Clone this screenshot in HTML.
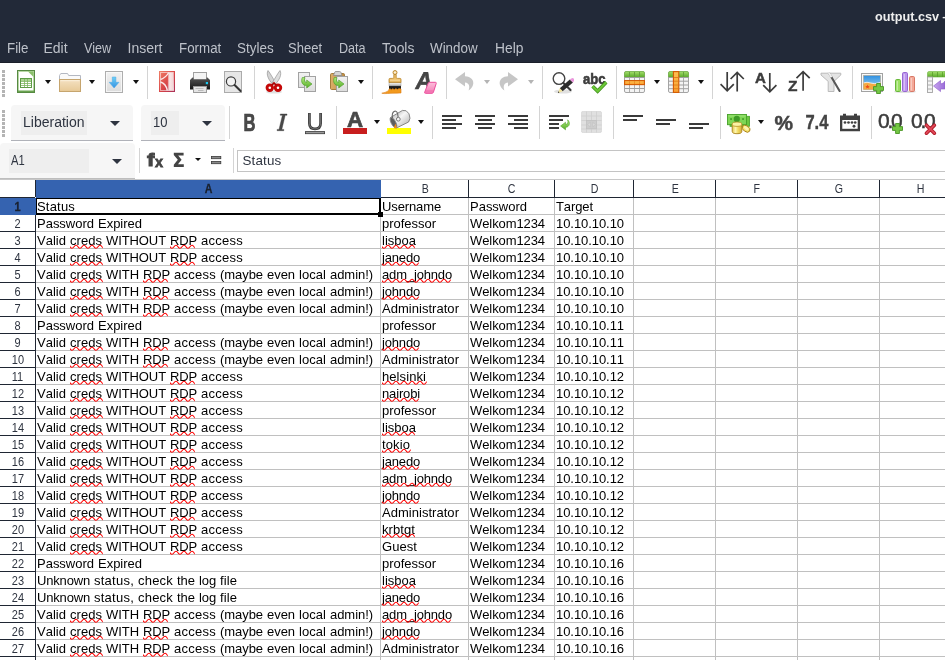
<!DOCTYPE html>
<html><head><meta charset="utf-8"><title>output.csv</title>
<style>
html,body{margin:0;padding:0;}
body{width:945px;height:660px;overflow:hidden;background:#fff;position:relative;font-family:"Liberation Sans",sans-serif;color:#000;}
div,span,svg{position:absolute;box-sizing:border-box;}
#dark{left:0;top:0;width:945px;height:63px;background:#222938;border-bottom:1px solid #1a1f2a;}
#title{left:874.5px;top:8px;font-weight:bold;font-size:13.5px;color:#eeeeee;white-space:nowrap;line-height:18px;transform-origin:0 0;transform:scaleX(0.94);}
.m{top:39px;font-size:14px;line-height:18px;color:#bec2ca;white-space:nowrap;transform-origin:0 0;}
/* grid */
.ch{top:180px;height:17px;background:#fff;text-align:center;font-size:12.5px;line-height:19px;padding-left:1px;overflow:hidden;color:#2e3440;border-bottom:0;}
.ch.sel{height:18px;background:#3563b0;font-weight:bold;color:#1a202d;-webkit-text-stroke:0.300px #1a202d;}
.rh{left:0;width:35px;height:16px;text-align:center;font-size:12.5px;line-height:19px;overflow:hidden;color:#2e3440;background:#fff;}
.ch i{font-style:normal;display:inline-block;transform:scaleX(0.85);}
.rh i{font-style:normal;display:inline-block;transform:scaleX(0.88);}
.rh.sel{width:36px;height:17px;padding-right:1px;background:#3563b0;font-weight:bold;color:#1a202d;-webkit-text-stroke:0.300px #1a202d;}
.c{font-size:13px;line-height:17px;height:17px;white-space:nowrap;color:#000;font-kerning:none;}
.c span{top:0;left:0;height:17px;white-space:pre;}
.wv{left:0;top:12px;width:calc(100% + 1px);height:6px;overflow:hidden;}
.hl{left:36px;width:909px;height:1px;background:#c0c0c0;}
.vl{top:198px;width:1px;height:462px;background:#c0c0c0;}
/* header lines */
.dk{background:#1f2633;}
.sep{width:1px;background:#d4d4d4;}
.ar{width:0;height:0;border-left:3.5px solid transparent;border-right:3.5px solid transparent;border-top:4px solid #111;}
.combo{background:#f6f6f6;border-bottom:1px solid #b0b2b9;border-radius:4px 4px 0 0;}
.inp{background:#eeeeee;font-size:14px;color:#2e3440;line-height:22px;padding-left:2px;white-space:nowrap;}
.inp b{font-weight:normal;display:inline-block;transform-origin:0 50%;}
.ar.big{border-left-width:5px;border-right-width:5px;border-top-width:5px;border-top-color:#2e3440;}
</style></head><body><div id="wrap" style="left:0;top:0;width:945px;height:660px;will-change:transform">
<svg width="0" height="0" style="left:0;top:0"><defs><pattern id="wave" x="0" y="0" width="8" height="6" patternUnits="userSpaceOnUse"><path d="M-4 2.8 Q-2 -0.2 0 2.8 Q2 5.8 4 2.8 Q6 -0.2 8 2.8 Q10 5.8 12 2.8" fill="none" stroke="#ff0000" stroke-width="1.1"/></pattern></defs></svg>
<div id="dark"></div>
<div id="title">output.csv —</div>
<div class="m" style="left:7.05px;transform:scaleX(0.952)">File</div>
<div class="m" style="left:43.50px;transform:scaleX(1.000)">Edit</div>
<div class="m" style="left:84.00px;transform:scaleX(0.900)">View</div>
<div class="m" style="left:127.50px;transform:scaleX(1.000)">Insert</div>
<div class="m" style="left:178.50px;transform:scaleX(0.953)">Format</div>
<div class="m" style="left:236.50px;transform:scaleX(0.960)">Styles</div>
<div class="m" style="left:288.20px;transform:scaleX(0.930)">Sheet</div>
<div class="m" style="left:338.80px;transform:scaleX(0.900)">Data</div>
<div class="m" style="left:382.30px;transform:scaleX(0.990)">Tools</div>
<div class="m" style="left:430.20px;transform:scaleX(0.956)">Window</div>
<div class="m" style="left:495.00px;transform:scaleX(0.985)">Help</div>

<!-- shared defs -->
<svg width="0" height="0" style="left:0;top:0"><defs>
<linearGradient id="gGreenV" x1="0" y1="0" x2="0" y2="1"><stop offset="0" stop-color="#a4de6c"/><stop offset="1" stop-color="#5cab2c"/></linearGradient>
<linearGradient id="gPage" x1="0" y1="0" x2="0" y2="1"><stop offset="0" stop-color="#f2f2f2"/><stop offset="1" stop-color="#dcdcdc"/></linearGradient>
<linearGradient id="gTan" x1="0" y1="0" x2="0" y2="1"><stop offset="0" stop-color="#f4e1c2"/><stop offset="1" stop-color="#e7c996"/></linearGradient>
<linearGradient id="gBlue" x1="0" y1="0" x2="0" y2="1"><stop offset="0" stop-color="#6fd0f6"/><stop offset="1" stop-color="#3592e2"/></linearGradient>
<linearGradient id="gRed" x1="0" y1="0" x2="1" y2="1"><stop offset="0" stop-color="#f08068"/><stop offset="0.550" stop-color="#d84446"/><stop offset="1" stop-color="#a83058"/></linearGradient>
<linearGradient id="gBlack" x1="0" y1="0" x2="0" y2="1"><stop offset="0" stop-color="#555"/><stop offset="1" stop-color="#141414"/></linearGradient>
<linearGradient id="gArrowG" x1="0" y1="0" x2="0" y2="1"><stop offset="0" stop-color="#b0ea7c"/><stop offset="1" stop-color="#56ae28"/></linearGradient>
<linearGradient id="gClip" x1="0" y1="0" x2="1" y2="0"><stop offset="0" stop-color="#dcae68"/><stop offset="1" stop-color="#c08c42"/></linearGradient>
<linearGradient id="gOrange" x1="0" y1="0" x2="0" y2="1"><stop offset="0" stop-color="#fdc050"/><stop offset="1" stop-color="#f9a030"/></linearGradient>
<linearGradient id="gSky" x1="0" y1="0" x2="0" y2="1"><stop offset="0" stop-color="#2f8fe0"/><stop offset="1" stop-color="#a8dcf4"/></linearGradient>
<linearGradient id="gPurple" x1="0" y1="0" x2="1" y2="0"><stop offset="0" stop-color="#c8a4f0"/><stop offset="1" stop-color="#9a6cd8"/></linearGradient>
<linearGradient id="gPink" x1="0" y1="0" x2="0" y2="1"><stop offset="0" stop-color="#fcc0dc"/><stop offset="1" stop-color="#f47ab4"/></linearGradient>
<linearGradient id="gBucket" x1="0" y1="0" x2="1" y2="1"><stop offset="0" stop-color="#9a9a9a"/><stop offset="0.450" stop-color="#f6f6f6"/><stop offset="1" stop-color="#a8a8a8"/></linearGradient>
<linearGradient id="gBand" x1="0" y1="0" x2="1" y2="0"><stop offset="0" stop-color="#fbeeee" stop-opacity="0.350"/><stop offset="0.350" stop-color="#fbf0f0" stop-opacity="0.950"/><stop offset="1" stop-color="#f6e4e4" stop-opacity="0.900"/></linearGradient>
<linearGradient id="gFerr" x1="0" y1="0" x2="0" y2="1"><stop offset="0" stop-color="#fcfcfc"/><stop offset="1" stop-color="#b4b4b4"/></linearGradient>
<linearGradient id="gCoin" x1="0" y1="0" x2="1" y2="0"><stop offset="0" stop-color="#e8c84c"/><stop offset="0.350" stop-color="#fdf6b0"/><stop offset="0.600" stop-color="#f2dc62"/><stop offset="1" stop-color="#d8b03c"/></linearGradient>
</defs></svg>

<!-- toolbar 1 grip -->
<svg style="left:2px;top:70px" width="3" height="27"><g fill="#b4b4b4"><rect y="0" width="3" height="3"/><rect y="4" width="3" height="3"/><rect y="8" width="3" height="3"/><rect y="12" width="3" height="3"/><rect y="16" width="3" height="3"/><rect y="20" width="3" height="3"/><rect y="24" width="3" height="3"/></g></svg>
<!-- toolbar 2 grip -->
<svg style="left:2px;top:110px" width="3" height="27"><g fill="#b4b4b4"><rect y="0" width="3" height="3"/><rect y="4" width="3" height="3"/><rect y="8" width="3" height="3"/><rect y="12" width="3" height="3"/><rect y="16" width="3" height="3"/><rect y="20" width="3" height="3"/><rect y="24" width="3" height="3"/></g></svg>

<!-- new spreadsheet -->
<svg style="left:17px;top:70px" width="18" height="23" viewBox="0 0 18 23">
<rect x="0.5" y="0.5" width="17" height="22" fill="#cfe5c0" stroke="#568a42"/>
<rect x="1.5" y="1.5" width="15" height="20" fill="#fff" stroke="#b9d8a6" stroke-width="1"/>
<path d="M11 1.5 L16.5 1.5 L16.5 7 Z" fill="#8cc06c"/>
<rect x="3.5" y="8.5" width="11" height="9" fill="#fff" stroke="#5e9c46"/>
<rect x="4" y="9" width="10" height="2" fill="#a9d490"/>
<path d="M4 11.5H14 M4 13.5H14 M4 15.5H14 M7.5 9V17 M10.5 9V17" stroke="#7db560" stroke-width="0.8" fill="none"/>
<rect x="1" y="20.5" width="16" height="1.5" fill="#6aa350"/>
</svg>
<div class="ar" style="left:45px;top:80px"></div>
<!-- open folder -->
<svg style="left:59px;top:72px" width="22" height="21" viewBox="0 0 22 21">
<path d="M0.5 8 V3.5 L1.8 1.5 H8.6 L9.6 3.5 H21.5 V8 Z" fill="#fafafa" stroke="#b4b8c2"/>
<rect x="0.5" y="7.5" width="21" height="12" fill="url(#gTan)" stroke="#c6a56e"/>
<path d="M1.5 8.7 H20.5" stroke="#fbf0dc" stroke-width="1"/>
</svg>
<div class="ar" style="left:89px;top:80px"></div>
<!-- save -->
<svg style="left:105px;top:71px" width="18" height="22" viewBox="0 0 18 22">
<rect x="0.500" y="0.500" width="17" height="21" fill="url(#gPage)" stroke="#aeaeae"/>
<rect x="1.5" y="1.5" width="15" height="19" fill="none" stroke="#fafafa" stroke-opacity="0.8"/>
<path d="M7.3 6 H10.9 V11.3 H14 L9.1 17 L4.2 11.3 H7.3 Z" fill="url(#gBlue)" stroke="#4aa8e8" stroke-width="0.5"/>
</svg>
<div class="ar" style="left:133px;top:80px"></div>
<div class="sep" style="left:147px;top:66px;height:33px"></div>
<!-- pdf -->
<svg style="left:159px;top:71px" width="16" height="21" viewBox="0 0 16 21">
<rect x="0" y="0" width="16" height="21" fill="url(#gRed)"/>
<rect x="1.5" y="1.5" width="13" height="18" fill="none" stroke="#fff" stroke-opacity="0.55"/>
<path d="M9.200 1.500 L14 1.500 L14.800 19.500 L8.500 19.500 Z" fill="url(#gBand)"/>
<path d="M1.5 8.5 C5 7.5 8 4.5 9.8 1.5 M1.5 11 C5 12 7.5 15.5 8.3 19.5" stroke="#fbeaea" stroke-width="1.400" fill="none"/>
</svg>
<!-- printer -->
<svg style="left:190px;top:72px" width="20" height="21" viewBox="0 0 20 21">
<rect x="3.5" y="0.5" width="13" height="7" fill="#f4f4f4" stroke="#a0a0a0"/>
<path d="M0 8 L2.5 5.5 H3.5 V7.5 H16.5 V5.5 H17.5 L20 8 V17.5 H0 Z" fill="url(#gBlack)"/>
<rect x="3.5" y="14.5" width="13" height="6" fill="#e4e4e4" stroke="#9a9a9a"/>
<path d="M5.5 16.5 H13.5 M8 18.5 H13.5" stroke="#b4b4b4" stroke-width="0.9"/>
<rect x="15.8" y="10" width="2.2" height="2.2" fill="#18c8f0"/>
</svg>
<!-- print preview -->
<svg style="left:224px;top:71px" width="19" height="22" viewBox="0 0 19 22">
<rect x="0.5" y="0.5" width="17" height="21" fill="#e6e6e6" stroke="#ababab"/>
<circle cx="7" cy="10.4" r="4.6" fill="#f2f2f2" stroke="#3a3a3a" stroke-width="1.2"/>
<path d="M10.6 14 L16.6 20" stroke="#333" stroke-width="2" stroke-linecap="round"/>
</svg>
<div class="sep" style="left:254px;top:66px;height:33px"></div>
<!-- cut -->
<svg style="left:265px;top:70px" width="18" height="24" viewBox="0 0 18 24">
<ellipse cx="9" cy="22" rx="8" ry="1.6" fill="#000" fill-opacity="0.12"/>
<path d="M3 0.500 C1 4.500 3.300 9.500 8.200 15 L10.700 12.600 C8 8.500 5.400 3.500 3 0.500 Z" fill="#d4d4d4" stroke="#868686" stroke-width="0.600"/>
<path d="M15 0.500 C17 4.500 14.700 9.500 9.800 15 L7.300 12.600 C10 8.500 12.600 3.500 15 0.500 Z" fill="#dedede" stroke="#868686" stroke-width="0.600"/>
<circle cx="4.8" cy="17.7" r="2.750" fill="none" stroke="#c40808" stroke-width="2.900"/>
<circle cx="13" cy="17.7" r="2.750" fill="none" stroke="#c40808" stroke-width="2.900"/>
<path d="M7 15 L9 13 L11 15" stroke="#a00" stroke-width="1.6" fill="none"/>
</svg>
<!-- copy -->
<svg style="left:298px;top:72px" width="18" height="20" viewBox="0 0 18 20">
<rect x="0.5" y="0.5" width="11" height="15" fill="url(#gPage)" stroke="#a2a2a2"/>
<rect x="6.5" y="4.5" width="11" height="15" fill="url(#gPage)" stroke="#a2a2a2"/>
<path d="M7 5.600 C5.900 8.400 6.700 10.400 8.700 10.500 V8 L14 12 L8.700 16 V13.600 C4.400 13.700 2.500 9.800 4.300 5.500 Z" fill="url(#gArrowG)" stroke="#4a9a26" stroke-width="0.600"/>
</svg>
<!-- paste -->
<svg style="left:329px;top:70px" width="20" height="22" viewBox="0 0 20 22">
<rect x="1.5" y="3.5" width="14" height="16" rx="1.2" fill="url(#gClip)" stroke="#a47c3c"/>
<path d="M4.5 5.5 L5.5 2.5 Q5.8 1.5 7 1.5 H10.5 Q11.6 1.5 12 2.5 L13 5.5 Z" fill="#d4d4d4" stroke="#8a8a8a" stroke-width="0.8"/>
<rect x="7.5" y="6.5" width="11" height="15" fill="url(#gPage)" stroke="#a2a2a2"/>
<path d="M8 7.600 C6.900 10.400 7.700 12.400 9.700 12.500 V10 L15 14 L9.700 18 V15.600 C5.400 15.700 3.500 11.800 5.300 7.500 Z" fill="url(#gArrowG)" stroke="#4a9a26" stroke-width="0.600"/>
</svg>
<div class="ar" style="left:358px;top:80px"></div>
<div class="sep" style="left:372px;top:66px;height:33px"></div>
<!-- clone formatting brush -->
<svg style="left:381px;top:69px" width="21" height="26" viewBox="0 0 21 26">
<rect x="8" y="16.800" width="12" height="4" fill="#1c1c1c"/>
<rect x="8" y="13.400" width="12" height="3.500" fill="url(#gFerr)" stroke="#8a8a8a" stroke-width="0.400"/>
<path d="M12.800 5.500 V8.500 Q12.800 9.300 11.400 9.400 H9 Q8 9.400 8 10.400 V13.400 H20 V10.400 Q20 9.400 19 9.400 H16.600 Q15.200 9.300 15.200 8.500 V5.500 Z" fill="#ecbe68" stroke="#b8842a" stroke-width="0.800"/>
<path d="M9 11.200 H19" stroke="#f8dca0" stroke-width="0.900"/>
<circle cx="14" cy="3.500" r="2" fill="#f4d8a0" stroke="#b8842a" stroke-width="0.900"/>
<circle cx="14" cy="3.500" r="0.700" fill="#fff"/>
<path d="M0.800 24.200 C4 23.800 6 22.600 7.600 21.400 C8 20 8.400 19.400 9.200 19.800 L10.400 20.800 L11.800 19.600 L13.200 20.800 L14.800 19.400 L16.400 20.600 L18 19.400 L20 20 V24 C17 23.600 15 24.600 12 24.200 C8 24 5 25.200 0.800 24.200 Z" fill="#f29a1e" stroke="#dc7a10" stroke-width="0.600" stroke-linejoin="round"/>
</svg>
<!-- clear formatting -->
<svg style="left:414px;top:72px" width="23" height="23" viewBox="0 0 23 23">
<text x="1.400" y="17" font-family="Liberation Sans" font-weight="bold" font-style="italic" font-size="23.200" fill="#454545" stroke="#454545" stroke-width="0.600">A</text>
<path d="M15.400 10.300 H21.400 Q22.600 10.300 22.200 11.500 L19.400 20.300 Q19 21.300 18 21.300 H11.400 Q10.200 21.300 10.700 20.200 L14.200 11.200 Q14.600 10.300 15.400 10.300 Z" fill="url(#gPink)" stroke="#ec4c9c" stroke-width="1" stroke-linejoin="round"/>
<path d="M11.200 19 H19.600" stroke="#f064a8" stroke-width="0.900"/>
</svg>
<div class="sep" style="left:446px;top:66px;height:33px"></div>
<!-- undo (disabled) -->
<svg style="left:454px;top:71px" width="21" height="21" viewBox="0 0 21 21">
<path d="M1 8.3 L11 1 V5.2 C17 5.4 20.5 9.5 19 14 C18.2 16.5 16.5 18.3 14.6 19.4 C16 16 15.5 12 11 11.6 V15.6 Z" fill="#c6c6c6"/>
</svg>
<div class="ar" style="left:484px;top:80px;border-top-color:#b4b4b4"></div>
<!-- redo (disabled) -->
<svg style="left:498px;top:71px" width="21" height="21" viewBox="0 0 21 21">
<path d="M20 8.3 L10 1 V5.2 C4 5.4 0.5 9.5 2 14 C2.800 16.5 4.500 18.3 6.400 19.4 C5 16 5.500 12 10 11.6 V15.6 Z" fill="#c6c6c6"/>
</svg>
<div class="ar" style="left:528px;top:80px;border-top-color:#b4b4b4"></div>
<div class="sep" style="left:542px;top:66px;height:33px"></div>
<!-- find & replace -->
<svg style="left:551px;top:71px" width="24" height="24" viewBox="0 0 24 24">
<ellipse cx="12" cy="20.5" rx="9" ry="2" fill="#000" fill-opacity="0.12"/>
<circle cx="8" cy="7.6" r="5.8" fill="#fff" stroke="#444" stroke-width="1.4"/>
<path d="M12.4 12 L19.5 19" stroke="#3a3a3a" stroke-width="2.2" stroke-linecap="round"/>
<path d="M18.8 8.6 L22 11.4 L11.6 20.2 L8.8 17.2 Z" fill="#2c2c2c"/>
<path d="M18.8 8.6 L20.4 7.4 Q22 6.6 23 8 Q23.6 9.6 22 11.4 Z" fill="#ea96dc"/>
<path d="M8.8 17.2 L11.6 20.2 L7 22 Z" fill="#f2e49a"/>
<path d="M7 22 L8.4 21.4 L7.6 20.2 Z" fill="#111"/>
</svg>
<!-- spelling -->
<svg style="left:582px;top:70px" width="27" height="24" viewBox="0 0 27 24">
<text x="1" y="13.8" font-family="Liberation Sans" font-weight="bold" font-size="15" fill="#3c3c3c" stroke="#3c3c3c" stroke-width="0.600" textLength="22.500" lengthAdjust="spacingAndGlyphs">abc</text>
<path d="M10.6 16.2 L15.6 21.2 L24.2 12.2" fill="none" stroke="#3e8c1a" stroke-width="3.6" stroke-linejoin="miter"/>
<path d="M10.6 16.2 L15.6 21.2 L24.2 12.2" fill="none" stroke="#6cc838" stroke-width="2.2" stroke-linejoin="miter"/>
</svg>
<div class="sep" style="left:616px;top:66px;height:33px"></div>
<!-- rows -->
<svg style="left:624px;top:71px" width="21" height="22" viewBox="0 0 21 22">
<rect x="0.5" y="0.5" width="20" height="21" rx="1.5" fill="#f4f4f4" stroke="#a4a4a4"/>
<path d="M0.5 6 V2 Q0.5 0.5 2 0.5 H19 Q20.500 0.5 20.5 2 V6 Z" fill="url(#gGreenV)" stroke="#6cb43c" stroke-width="0.6"/>
<path d="M5.5 1V21 M10.5 1V21 M15.5 1V21" stroke="#9c9c9c" stroke-width="0.8" fill="none"/>
<path d="M5.500 1V6 M10.5 1V6 M15.5 1V6" stroke="#58a028" stroke-width="0.8" fill="none"/>
<path d="M1 6.500H20 M1 17.500H20" stroke="#a0a0a0" stroke-width="1" fill="none"/>
<rect x="0.600" y="9.600" width="19.800" height="4" fill="url(#gOrange)" stroke="#d45a00" stroke-width="1.100"/>
<path d="M5.500 10.200V13 M10.500 10.200V13 M15.500 10.200V13" stroke="#e88820" stroke-width="0.800" fill="none"/>
</svg>
<div class="ar" style="left:654px;top:80px"></div>
<!-- columns -->
<svg style="left:668px;top:71px" width="21" height="22" viewBox="0 0 21 22">
<rect x="0.5" y="0.5" width="20" height="21" rx="1.5" fill="#f4f4f4" stroke="#a4a4a4"/>
<path d="M0.5 6 V2 Q0.5 0.5 2 0.5 H19 Q20.500 0.5 20.5 2 V6 Z" fill="url(#gGreenV)" stroke="#6cb43c" stroke-width="0.6"/>
<path d="M5.5 1V21 M10.5 1V21 M15.5 1V21" stroke="#9c9c9c" stroke-width="0.8" fill="none"/>
<path d="M1 6.500H20 M1 10.200H20 M1 14H20 M1 17.700H20" stroke="#a0a0a0" stroke-width="1" fill="none"/>
<path d="M15.500 1V6" stroke="#58a028" stroke-width="0.8" fill="none"/>
<rect x="5.400" y="0.6" width="5.4" height="20.8" fill="url(#gOrange)" stroke="#d45a00" stroke-width="1.1"/>
<path d="M6 6.500H10.500 M6 10.200H10.500 M6 14H10.500 M6 17.700H10.500" stroke="#e07a18" stroke-width="0.900" fill="none"/>
</svg>
<div class="ar" style="left:698px;top:80px"></div>
<div class="sep" style="left:712px;top:66px;height:33px"></div>
<!-- sort -->
<svg style="left:719px;top:70px" width="26" height="23" viewBox="0 0 26 23">
<g fill="none" stroke="#3c3c3c" stroke-width="1.7">
<path d="M8.2 2 V20.6 M1.6 14.2 L8.2 20.8 L14.8 14.2"/>
<path d="M18.2 21.5 V2.600 M11.6 9 L18.2 2.400 L24.8 9"/>
</g></svg>
<!-- sort asc -->
<svg style="left:754px;top:70px" width="24" height="24" viewBox="0 0 24 24">
<text x="0.900" y="13.400" font-family="Liberation Sans" font-weight="bold" font-size="15" fill="#3c3c3c" stroke="#3c3c3c" stroke-width="0.500">A</text>
<g fill="none" stroke="#3c3c3c" stroke-width="1.7"><path d="M15.8 3 V21.6 M9.2 15.200 L15.8 21.8 L22.4 15.2"/></g>
</svg>
<!-- sort desc -->
<svg style="left:787px;top:69px" width="24" height="24" viewBox="0 0 24 24">
<text x="1" y="22.400" font-family="Liberation Sans" font-weight="bold" font-size="15.500" fill="#3c3c3c" stroke="#3c3c3c" stroke-width="0.400">Z</text>
<g fill="none" stroke="#3c3c3c" stroke-width="1.7"><path d="M16.1 21.7 V2.800 M9.5 9.200 L16.1 2.600 L22.700 9.200"/></g>
</svg>
<!-- autofilter -->
<svg style="left:820px;top:72px" width="23" height="21" viewBox="0 0 23 21">
<path d="M1 1.2 H20.800 V3 L14 9.400 V19.500 H8.200 V9.400 L1 3 Z" fill="#e4e4e4" stroke="#b4b4b4" stroke-width="0.9"/>
<path d="M9 1 L19.600 19" stroke="#585858" stroke-width="2.100" stroke-linecap="round"/>
<path d="M9 1 L11 4.400" stroke="#eee" stroke-width="2.100" stroke-linecap="round"/>
</svg>
<div class="sep" style="left:852px;top:66px;height:33px"></div>
<!-- insert image -->
<svg style="left:861px;top:73px" width="24" height="21" viewBox="0 0 24 21">
<rect x="0.5" y="0.5" width="21" height="18" fill="#fafafa" stroke="#a2a2a2"/>
<rect x="2.5" y="2.500" width="17" height="14" fill="url(#gSky)"/>
<path d="M2.500 10 Q6 8.500 9.500 10 T19.500 9.500 V16.500 H2.500 Z" fill="#f4aa42"/>
<path d="M2.500 10 Q6 8.500 9.500 10 T19.500 9.500" fill="none" stroke="#fff" stroke-width="0.9" stroke-opacity="0.85"/>
<rect x="2.500" y="2.500" width="17" height="14" fill="none" stroke="#c08030" stroke-opacity="0.5" stroke-width="0.6"/>
<path d="M6.500 11.400 L7.100 12.900 L8.700 13 L7.500 14 L7.900 15.600 L6.500 14.700 L5.100 15.600 L5.500 14 L4.300 13 L5.900 12.900 Z" fill="#f04818"/>
<path d="M15.600 10.500 H19.400 V13.600 H22.500 V17.400 H19.400 V20.500 H15.600 V17.400 H12.500 V13.600 H15.600 Z" fill="#74c844" stroke="#469422" stroke-width="0.9" stroke-linejoin="round"/>
</svg>
<!-- chart -->
<svg style="left:893px;top:71px" width="24" height="22" viewBox="0 0 24 22">
<ellipse cx="12" cy="20.800" rx="11" ry="1" fill="#000" fill-opacity="0.160"/>
<rect x="2.500" y="8.500" width="5" height="12" rx="1.200" fill="#9ae062" stroke="#68b83a" stroke-width="1"/>
<rect x="9.500" y="1.500" width="5" height="19" rx="1.200" fill="#bc94ee" stroke="#9868d2" stroke-width="1"/>
<rect x="16.500" y="5.500" width="5" height="15" rx="1.200" fill="#f4a898" stroke="#d87866" stroke-width="1"/>
<path d="M4.300 10V19.500 M11.300 3V19.500 M18.300 7V19.500" stroke="#fff" stroke-opacity="0.450" stroke-width="1.200"/>
</svg>
<!-- pivot table -->
<svg style="left:927px;top:71px" width="18" height="22" viewBox="0 0 18 22">
<path d="M0.5 6 V2 Q0.5 0.500 2 0.500 H18 V6 Z" fill="url(#gGreenV)" stroke="#6cb43c" stroke-width="0.6"/>
<path d="M5.500 1V6 M10.500 1V6 M15.500 1V6" stroke="#58a028" stroke-width="0.8"/>
<rect x="0.500" y="6" width="5" height="15.500" fill="#f4f4f4" stroke="#a4a4a4" stroke-width="0.9"/>
<path d="M1 10H5.500 M1 14H5.500 M1 18H5.500" stroke="#9c9c9c" stroke-width="0.8"/>
<path d="M6.500 15 L13.500 9.500 V12.800 C15.500 12.800 17 11.800 18 10 V18 H13.500 V20.600 Z" fill="url(#gPurple)" stroke="#8c5cc8" stroke-width="0.6"/>
</svg>
<!-- toolbar 2 -->
<div class="combo" style="left:11px;top:105px;width:122px;height:36px"></div>
<div class="inp" style="left:21px;top:111px;width:66px;height:24px">Liberation</div>
<div class="ar big" style="left:110px;top:121px"></div>
<div class="combo" style="left:141px;top:105px;width:84px;height:36px"></div>
<div class="inp" style="left:151px;top:111px;width:28px;height:24px;padding-left:1.5px"><b style="transform:scaleX(0.93)">10</b></div>
<div class="ar big" style="left:202px;top:121px"></div>
<div class="sep" style="left:229px;top:106px;height:33px"></div>
<!-- bold -->
<svg style="left:242px;top:111px" width="16" height="22" viewBox="0 0 16 22">
<text x="1.600" y="19.700" font-family="Liberation Sans" font-weight="bold" font-size="23" fill="#4a4a4a" stroke="#3a3a3a" stroke-width="0.700" textLength="12" lengthAdjust="spacingAndGlyphs">B</text>
</svg>
<!-- italic -->
<svg style="left:275px;top:112px" width="14" height="21" viewBox="0 0 14 21">
<path d="M5.300 2 H12 V3.300 H10.200 L6.800 17.400 H8.800 V18.700 H2.100 V17.400 H4 L7.400 3.300 H5.300 Z" fill="#484848" stroke="#3a3a3a" stroke-width="0.400"/>
</svg>
<!-- underline -->
<svg style="left:304px;top:112px" width="22" height="23" viewBox="0 0 22 23">
<path d="M5.400 1 V11.200 Q5.400 16.900 11 16.900 Q16.600 16.900 16.600 11.200 V1" fill="none" stroke="#3a3a3a" stroke-width="2.700"/>
<path d="M5.400 1.500 V11.200 Q5.400 16.900 11 16.900 Q16.600 16.900 16.600 11.200 V1.500" fill="none" stroke="#8a8a8a" stroke-width="0.700"/>
<rect x="1.400" y="19.600" width="19.200" height="2.100" fill="#9a9a9a" stroke="#3a3a3a" stroke-width="0.800"/>
</svg>
<div class="sep" style="left:336px;top:106px;height:33px"></div>
<!-- font color -->
<svg style="left:343px;top:108px" width="24" height="26" viewBox="0 0 24 26">
<text x="4" y="18.800" font-family="Liberation Sans" font-weight="bold" font-size="22.300" fill="#484848" stroke="#484848" stroke-width="0.700">A</text>
<rect x="0" y="20" width="24" height="6" fill="#c81e1e"/>
</svg>
<div class="ar" style="left:374px;top:120px"></div>
<!-- background color bucket -->
<svg style="left:386px;top:108px" width="26" height="26" viewBox="0 0 26 26">
<rect x="1" y="20" width="24" height="6" fill="#ffff00"/>
<path d="M4.600 9.400 L16.500 2.400 Q20.500 1.400 23 5.800 Q25.200 10.600 22.600 14 L10.400 20 Z" fill="url(#gBucket)" stroke="#6e6e6e" stroke-width="0.800"/>
<ellipse cx="7.500" cy="14.700" rx="2.300" ry="5.800" transform="rotate(-28 7.500 14.700)" fill="#5e5e5e" stroke="#8a8a8a" stroke-width="0.800"/>
<path d="M6.600 10 C5 3 10.500 1 11.600 5.600 L12.100 9" fill="none" stroke="#6a6a6a" stroke-width="1.100"/>
<circle cx="12.300" cy="11.200" r="1.900" fill="#f4f4f4" stroke="#6a6a6a" stroke-width="0.900"/>
<path d="M7.600 20.200 Q8.400 18.400 9.300 15.400 Q11 18.400 10.800 20.200 Z" fill="#f08a1c"/>
</svg>
<div class="ar" style="left:418px;top:120px"></div>
<div class="sep" style="left:432px;top:106px;height:33px"></div>
<!-- align left -->
<svg style="left:442px;top:115px" width="20" height="14"><g fill="#3a3a3a"><rect x="0" y="0" width="20" height="2"/><rect x="0" y="4" width="14" height="2"/><rect x="0" y="8" width="20" height="2"/><rect x="0" y="12" width="14" height="2"/></g></svg>
<!-- align center -->
<svg style="left:475px;top:115px" width="20" height="14"><g fill="#3a3a3a"><rect x="0" y="0" width="20" height="2"/><rect x="3" y="4" width="14" height="2"/><rect x="0" y="8" width="20" height="2"/><rect x="3" y="12" width="14" height="2"/></g></svg>
<!-- align right -->
<svg style="left:508px;top:115px" width="20" height="14"><g fill="#3a3a3a"><rect x="0" y="0" width="20" height="2"/><rect x="6" y="4" width="14" height="2"/><rect x="0" y="8" width="20" height="2"/><rect x="6" y="12" width="14" height="2"/></g></svg>
<div class="sep" style="left:539px;top:106px;height:33px"></div>
<!-- wrap text -->
<svg style="left:549px;top:115px" width="22" height="16" viewBox="0 0 22 16"><g fill="#3a3a3a"><rect x="0" y="0" width="20" height="2"/><rect x="0" y="4" width="14" height="2"/><rect x="0" y="8" width="10" height="2"/><rect x="0" y="12" width="10" height="2"/></g>
<path d="M18.600 4.800 C21.800 7.600 20.600 12.200 16.500 12.400 V14.800 L11.600 11 L16.500 7.300 V9.600 C18.800 9.400 19.500 7 18.600 4.800 Z" fill="url(#gArrowG)" stroke="#52a42a" stroke-width="0.600"/>
</svg>
<!-- merge cells (disabled) -->
<svg style="left:581px;top:111px" width="21" height="22" viewBox="0 0 21 22">
<rect x="0.300" y="0.300" width="20.400" height="21.400" rx="2" fill="#e0e0e0" stroke="#d2d2d2" stroke-width="0.600"/>
<path d="M5.500 0.500V21.500 M10.500 0.500V21.500 M15.500 0.500V21.500 M0.500 5H20.500 M0.500 9.500H20.500 M0.500 14H20.500 M0.500 18H20.500" stroke="#d0d0d0" stroke-width="0.900" fill="none"/>
<rect x="5.600" y="9.400" width="9.800" height="8.400" fill="#cdcdcd" stroke="#c0c0c0" stroke-width="0.700"/>
<path d="M6.600 13.600 L9.300 11.400 V15.800 Z M14.400 13.600 L11.700 11.400 V15.800 Z" fill="#dcdcdc" stroke="#bcbcbc" stroke-width="0.500"/>
</svg>
<div class="sep" style="left:613px;top:106px;height:33px"></div>
<!-- vertical align top/center/bottom -->
<svg style="left:623px;top:115px" width="20" height="6"><g fill="#3a3a3a"><rect x="0" y="0" width="20" height="2"/><rect x="0" y="4" width="14" height="2"/></g></svg>
<svg style="left:656px;top:119px" width="20" height="6"><g fill="#3a3a3a"><rect x="0" y="0" width="20" height="2"/><rect x="0" y="4" width="14" height="2"/></g></svg>
<svg style="left:689px;top:123px" width="20" height="6"><g fill="#3a3a3a"><rect x="0" y="0" width="20" height="2"/><rect x="0" y="4" width="14" height="2"/></g></svg>
<div class="sep" style="left:720px;top:106px;height:33px"></div>
<!-- currency -->
<svg style="left:726px;top:113px" width="26" height="22" viewBox="0 0 26 22">
<rect x="4" y="3.300" width="19.500" height="10" fill="#6cc840" stroke="#46a028" stroke-width="0.800"/>
<rect x="1.500" y="1.500" width="19" height="10.200" fill="#7ed654" stroke="#46a028" stroke-width="0.900"/>
<rect x="2.400" y="2.400" width="17.200" height="1.200" fill="#a4e880" fill-opacity="0.700"/>
<circle cx="10.800" cy="5.900" r="3.100" fill="#3e9a26"/>
<path d="M6.800 11.700 Q6.800 8.600 10.800 8.600 Q14.800 8.600 14.800 11.700 Z" fill="#3e9a26"/>
<rect x="4.200" y="5.200" width="1.700" height="1.700" fill="#3e9a26"/><rect x="16.200" y="5.200" width="1.700" height="1.700" fill="#3e9a26"/>
<ellipse cx="20.100" cy="15.700" rx="4.300" ry="2.900" transform="rotate(35 20.100 15.700)" fill="#f6e066" stroke="#a8821e" stroke-width="0.900"/>
<ellipse cx="20.300" cy="15.200" rx="2.800" ry="1.500" transform="rotate(35 20.300 15.200)" fill="#fcf4b0"/>
<path d="M6.200 11.200 V18.400 Q6.200 20.700 11 20.700 Q15.800 20.700 15.800 18.400 V11.200 Z" fill="url(#gCoin)" stroke="#a8821e" stroke-width="0.900"/>
<ellipse cx="11" cy="11.200" rx="4.800" ry="2.200" fill="#fbf2a4" stroke="#b89226" stroke-width="0.800"/>
</svg>
<div class="ar" style="left:758px;top:120px"></div>
<!-- percent -->
<svg style="left:773px;top:111px" width="22" height="22" viewBox="0 0 22 22">
<text x="1.500" y="18.600" font-family="Liberation Sans" font-weight="bold" font-size="21" fill="#444" stroke="#444" stroke-width="0.500" textLength="18.500" lengthAdjust="spacingAndGlyphs">%</text>
</svg>
<!-- number 7.4 -->
<svg style="left:804px;top:111px" width="26" height="22" viewBox="0 0 26 22">
<text x="1.400" y="18.400" font-family="Liberation Sans" font-weight="bold" font-size="20.500" fill="#444" stroke="#444" stroke-width="0.400" textLength="23" lengthAdjust="spacingAndGlyphs">7.4</text>
</svg>
<!-- date -->
<svg style="left:839px;top:113px" width="22" height="19" viewBox="0 0 22 19">
<path d="M1 2.500 H4 V0.800 H7 V2.500 H15 V0.800 H18 V2.500 H21 V18.200 H1 Z" fill="#404040"/>
<rect x="3.300" y="7" width="15.400" height="8.800" fill="#fff"/>
<g fill="#404040"><circle cx="6" cy="9.500" r="1.350"/><circle cx="9.500" cy="9.500" r="1.350"/><circle cx="13" cy="9.500" r="1.350"/><circle cx="16.200" cy="9.500" r="1.350"/><circle cx="15" cy="13.300" r="1.450"/></g>
</svg>
<div class="sep" style="left:871px;top:106px;height:33px"></div>
<!-- add decimal -->
<svg style="left:877px;top:110px" width="28" height="26" viewBox="0 0 28 26">
<text x="1" y="17.600" font-family="Liberation Sans" font-size="21" fill="#3c3c3c" stroke="#3c3c3c" stroke-width="0.500" letter-spacing="-2.300">0.0</text>
<path d="M18.600 13.500 H22.400 V16.600 H25.500 V20.400 H22.400 V23.500 H18.600 V20.400 H15.500 V16.600 H18.600 Z" fill="#74c844" stroke="#469422" stroke-width="0.900" stroke-linejoin="round"/>
</svg>
<!-- delete decimal -->
<svg style="left:910px;top:110px" width="28" height="26" viewBox="0 0 28 26">
<text x="1" y="17.600" font-family="Liberation Sans" font-size="21" fill="#3c3c3c" stroke="#3c3c3c" stroke-width="0.500" letter-spacing="-2.300">0.0</text>
<path d="M16.400 15.200 L24.400 23.200 M24.400 15.200 L16.400 23.200" stroke="#b01c28" stroke-width="3.600" stroke-linecap="round"/>
<path d="M16.400 15.200 L24.400 23.200 M24.400 15.200 L16.400 23.200" stroke="#e04858" stroke-width="1.800" stroke-linecap="round"/>
</svg>

<!-- formula bar icons -->
<svg style="left:146px;top:150px" width="19" height="19" viewBox="0 0 19 19">
<text x="1" y="15.800" font-family="Liberation Sans" font-weight="bold" font-size="18.600" fill="#444" stroke="#444" stroke-width="0.900" textLength="7.400" lengthAdjust="spacingAndGlyphs">f</text>
<text x="9" y="16.800" font-family="Liberation Sans" font-weight="bold" font-size="15" fill="#444" stroke="#444" stroke-width="0.800" textLength="8" lengthAdjust="spacingAndGlyphs">x</text>
</svg>
<svg style="left:173px;top:152px" width="12" height="16" viewBox="0 0 12 16">
<path d="M0.800 0.800 H10.600 V3.600 H5.200 L8.600 7.700 L5 12.200 H10.800 V15 H0.800 V12.800 L4.800 7.700 L0.800 3 Z" fill="#444"/>
</svg>
<div class="ar" style="left:195px;top:158px;border-left-width:3px;border-right-width:3px;border-top-width:3.500px"></div>
<svg style="left:211px;top:156px" width="11" height="9"><rect x="0.500" y="0.500" width="9.300" height="2.200" fill="#8a8a8a" stroke="#3a3a3a" stroke-width="0.800"/><rect x="0.500" y="5.500" width="9.300" height="2.200" fill="#8a8a8a" stroke="#3a3a3a" stroke-width="0.800"/></svg>


<!-- formula bar -->
<div class="combo" style="left:0;top:143px;width:135px;height:36px;border-bottom:1px solid #bdbdbd"></div>
<div class="inp" style="left:9px;top:149px;width:80px;height:24px;"><b style="transform:scaleX(0.8)">A1</b></div>
<div class="ar" style="left:112px;top:159px;border-left-width:5px;border-right-width:5px;border-top-width:5px;border-top-color:#2e3440"></div>
<div class="sep" style="left:139px;top:148px;height:25px"></div>
<div class="sep" style="left:233px;top:148px;height:25px"></div>
<div style="left:237px;top:150px;width:720px;height:22px;border:1px solid #c4c4c4;background:#fff"></div>
<div style="left:242.5px;top:149px;font-size:13.400px;line-height:23px;color:#2e3440;letter-spacing:0.150px">Status</div>

<!-- grid -->
<div style="left:0;top:179px;width:945px;height:1px;background:#c8c8c8"></div>
<div style="left:0;top:180px;width:35px;height:17px;background:#fff"></div>
<div class="hl" style="top:214px"></div>
<div class="hl" style="top:231px"></div>
<div class="hl" style="top:248px"></div>
<div class="hl" style="top:265px"></div>
<div class="hl" style="top:282px"></div>
<div class="hl" style="top:299px"></div>
<div class="hl" style="top:316px"></div>
<div class="hl" style="top:333px"></div>
<div class="hl" style="top:350px"></div>
<div class="hl" style="top:367px"></div>
<div class="hl" style="top:384px"></div>
<div class="hl" style="top:401px"></div>
<div class="hl" style="top:418px"></div>
<div class="hl" style="top:435px"></div>
<div class="hl" style="top:452px"></div>
<div class="hl" style="top:469px"></div>
<div class="hl" style="top:486px"></div>
<div class="hl" style="top:503px"></div>
<div class="hl" style="top:520px"></div>
<div class="hl" style="top:537px"></div>
<div class="hl" style="top:554px"></div>
<div class="hl" style="top:571px"></div>
<div class="hl" style="top:588px"></div>
<div class="hl" style="top:605px"></div>
<div class="hl" style="top:622px"></div>
<div class="hl" style="top:639px"></div>
<div class="hl" style="top:656px"></div>
<div class="hl" style="top:673px"></div>
<div class="vl" style="left:380px"></div>
<div class="vl" style="left:468px"></div>
<div class="vl" style="left:554px"></div>
<div class="vl" style="left:633px"></div>
<div class="vl" style="left:715px"></div>
<div class="vl" style="left:797px"></div>
<div class="vl" style="left:879px"></div>
<div class="vl" style="left:961px"></div>
<div class="ch sel" style="left:36px;width:345px"><i>A</i></div>
<div class="ch" style="left:381px;width:87px"><i>B</i></div>
<div class="dk" style="left:468px;top:180px;width:1px;height:17px"></div>
<div class="ch" style="left:469px;width:85px"><i>C</i></div>
<div class="dk" style="left:554px;top:180px;width:1px;height:17px"></div>
<div class="ch" style="left:555px;width:78px"><i>D</i></div>
<div class="dk" style="left:633px;top:180px;width:1px;height:17px"></div>
<div class="ch" style="left:634px;width:81px"><i>E</i></div>
<div class="dk" style="left:715px;top:180px;width:1px;height:17px"></div>
<div class="ch" style="left:716px;width:81px"><i>F</i></div>
<div class="dk" style="left:797px;top:180px;width:1px;height:17px"></div>
<div class="ch" style="left:798px;width:81px"><i>G</i></div>
<div class="dk" style="left:879px;top:180px;width:1px;height:17px"></div>
<div class="ch" style="left:880px;width:81px"><i>H</i></div>
<div class="dk" style="left:961px;top:180px;width:1px;height:17px"></div>
<div class="rh sel" style="top:198px"><i>1</i></div>
<div class="c" style="left:37px;top:198px"><span style="letter-spacing:0.190px">Status</span></div>
<div class="c" style="left:382px;top:198px"><span style="letter-spacing:-0.121px">Username</span></div>
<div class="c" style="left:470px;top:198px"><span style="letter-spacing:-0.010px">Password</span></div>
<div class="c" style="left:556px;top:198px"><span style="letter-spacing:-0.096px">Target</span></div>
<div class="rh" style="top:215px"><i>2</i></div>
<div class="dk" style="left:0;top:231px;width:35px;height:1px"></div>
<div class="c" style="left:37px;top:215px"><span style="letter-spacing:-0.010px">Password</span><span style="left:61px;letter-spacing:-0.011px">Expired</span></div>
<div class="c" style="left:382px;top:215px"><span style="letter-spacing:-0.023px">professor</span></div>
<div class="c" style="left:470px;top:215px"><span style="letter-spacing:-0.087px">Welkom1234</span></div>
<div class="c" style="left:556px;top:215px"><span style="letter-spacing:-0.062px">10.10.10.10</span></div>
<div class="rh" style="top:232px"><i>3</i></div>
<div class="dk" style="left:0;top:248px;width:35px;height:1px"></div>
<div class="c" style="left:37px;top:232px"><span style="letter-spacing:0.016px">Valid</span><span class="w" style="left:33px;letter-spacing:0.041px;width:32px">creds<svg class="wv" style="width:32.8px"><rect width="100%" height="6" fill="url(#wave)"/></svg></span><span style="left:69px;letter-spacing:-0.094px">WITHOUT</span><span class="w" style="left:133px;letter-spacing:-0.151px;width:27px">RDP<svg class="wv" style="width:24.8px"><rect width="100%" height="6" fill="url(#wave)"/></svg></span><span style="left:164px;letter-spacing:0.255px">access</span></div>
<div class="c" style="left:382px;top:232px"><span class="w" style="letter-spacing:0.005px;width:34px">lisboa<svg class="wv" style="width:32.8px"><rect width="100%" height="6" fill="url(#wave)"/></svg></span></div>
<div class="c" style="left:470px;top:232px"><span style="letter-spacing:-0.087px">Welkom1234</span></div>
<div class="c" style="left:556px;top:232px"><span style="letter-spacing:-0.062px">10.10.10.10</span></div>
<div class="rh" style="top:249px"><i>4</i></div>
<div class="dk" style="left:0;top:265px;width:35px;height:1px"></div>
<div class="c" style="left:37px;top:249px"><span style="letter-spacing:0.016px">Valid</span><span class="w" style="left:33px;letter-spacing:0.041px;width:32px">creds<svg class="wv" style="width:32.8px"><rect width="100%" height="6" fill="url(#wave)"/></svg></span><span style="left:69px;letter-spacing:-0.094px">WITHOUT</span><span class="w" style="left:133px;letter-spacing:-0.151px;width:27px">RDP<svg class="wv" style="width:24.8px"><rect width="100%" height="6" fill="url(#wave)"/></svg></span><span style="left:164px;letter-spacing:0.255px">access</span></div>
<div class="c" style="left:382px;top:249px"><span class="w" style="letter-spacing:-0.174px;width:38px">janedo<svg class="wv" style="width:36.8px"><rect width="100%" height="6" fill="url(#wave)"/></svg></span></div>
<div class="c" style="left:470px;top:249px"><span style="letter-spacing:-0.087px">Welkom1234</span></div>
<div class="c" style="left:556px;top:249px"><span style="letter-spacing:-0.062px">10.10.10.10</span></div>
<div class="rh" style="top:266px"><i>5</i></div>
<div class="dk" style="left:0;top:282px;width:35px;height:1px"></div>
<div class="c" style="left:37px;top:266px"><span style="letter-spacing:0.016px">Valid</span><span class="w" style="left:33px;letter-spacing:0.041px;width:32px">creds<svg class="wv" style="width:32.8px"><rect width="100%" height="6" fill="url(#wave)"/></svg></span><span style="left:69px;letter-spacing:-0.055px">WITH</span><span class="w" style="left:106px;letter-spacing:-0.151px;width:27px">RDP<svg class="wv" style="width:24.8px"><rect width="100%" height="6" fill="url(#wave)"/></svg></span><span style="left:137px;letter-spacing:0.255px">access</span><span style="left:183px;letter-spacing:-0.060px">(maybe</span><span style="left:230px;letter-spacing:-0.051px">even</span><span style="left:262px;letter-spacing:0.050px">local</span><span style="left:293px;letter-spacing:-0.051px">admin!)</span></div>
<div class="c" style="left:382px;top:266px"><span class="w" style="letter-spacing:-0.156px;width:70px">adm_johndo<svg class="wv" style="width:68.8px"><rect width="100%" height="6" fill="url(#wave)"/></svg></span></div>
<div class="c" style="left:470px;top:266px"><span style="letter-spacing:-0.087px">Welkom1234</span></div>
<div class="c" style="left:556px;top:266px"><span style="letter-spacing:-0.062px">10.10.10.10</span></div>
<div class="rh" style="top:283px"><i>6</i></div>
<div class="dk" style="left:0;top:299px;width:35px;height:1px"></div>
<div class="c" style="left:37px;top:283px"><span style="letter-spacing:0.016px">Valid</span><span class="w" style="left:33px;letter-spacing:0.041px;width:32px">creds<svg class="wv" style="width:32.8px"><rect width="100%" height="6" fill="url(#wave)"/></svg></span><span style="left:69px;letter-spacing:-0.055px">WITH</span><span class="w" style="left:106px;letter-spacing:-0.151px;width:27px">RDP<svg class="wv" style="width:24.8px"><rect width="100%" height="6" fill="url(#wave)"/></svg></span><span style="left:137px;letter-spacing:0.255px">access</span><span style="left:183px;letter-spacing:-0.060px">(maybe</span><span style="left:230px;letter-spacing:-0.051px">even</span><span style="left:262px;letter-spacing:0.050px">local</span><span style="left:293px;letter-spacing:-0.051px">admin!)</span></div>
<div class="c" style="left:382px;top:283px"><span class="w" style="letter-spacing:-0.174px;width:38px">johndo<svg class="wv" style="width:36.8px"><rect width="100%" height="6" fill="url(#wave)"/></svg></span></div>
<div class="c" style="left:470px;top:283px"><span style="letter-spacing:-0.087px">Welkom1234</span></div>
<div class="c" style="left:556px;top:283px"><span style="letter-spacing:-0.062px">10.10.10.10</span></div>
<div class="rh" style="top:300px"><i>7</i></div>
<div class="dk" style="left:0;top:316px;width:35px;height:1px"></div>
<div class="c" style="left:37px;top:300px"><span style="letter-spacing:0.016px">Valid</span><span class="w" style="left:33px;letter-spacing:0.041px;width:32px">creds<svg class="wv" style="width:32.8px"><rect width="100%" height="6" fill="url(#wave)"/></svg></span><span style="left:69px;letter-spacing:-0.055px">WITH</span><span class="w" style="left:106px;letter-spacing:-0.151px;width:27px">RDP<svg class="wv" style="width:24.8px"><rect width="100%" height="6" fill="url(#wave)"/></svg></span><span style="left:137px;letter-spacing:0.255px">access</span><span style="left:183px;letter-spacing:-0.060px">(maybe</span><span style="left:230px;letter-spacing:-0.051px">even</span><span style="left:262px;letter-spacing:0.050px">local</span><span style="left:293px;letter-spacing:-0.051px">admin!)</span></div>
<div class="c" style="left:382px;top:300px"><span style="letter-spacing:0.032px">Administrator</span></div>
<div class="c" style="left:470px;top:300px"><span style="letter-spacing:-0.087px">Welkom1234</span></div>
<div class="c" style="left:556px;top:300px"><span style="letter-spacing:-0.062px">10.10.10.10</span></div>
<div class="rh" style="top:317px"><i>8</i></div>
<div class="dk" style="left:0;top:333px;width:35px;height:1px"></div>
<div class="c" style="left:37px;top:317px"><span style="letter-spacing:-0.010px">Password</span><span style="left:61px;letter-spacing:-0.011px">Expired</span></div>
<div class="c" style="left:382px;top:317px"><span style="letter-spacing:-0.023px">professor</span></div>
<div class="c" style="left:470px;top:317px"><span style="letter-spacing:-0.087px">Welkom1234</span></div>
<div class="c" style="left:556px;top:317px"><span style="letter-spacing:-0.062px">10.10.10.11</span></div>
<div class="rh" style="top:334px"><i>9</i></div>
<div class="dk" style="left:0;top:350px;width:35px;height:1px"></div>
<div class="c" style="left:37px;top:334px"><span style="letter-spacing:0.016px">Valid</span><span class="w" style="left:33px;letter-spacing:0.041px;width:32px">creds<svg class="wv" style="width:32.8px"><rect width="100%" height="6" fill="url(#wave)"/></svg></span><span style="left:69px;letter-spacing:-0.055px">WITH</span><span class="w" style="left:106px;letter-spacing:-0.151px;width:27px">RDP<svg class="wv" style="width:24.8px"><rect width="100%" height="6" fill="url(#wave)"/></svg></span><span style="left:137px;letter-spacing:0.255px">access</span><span style="left:183px;letter-spacing:-0.060px">(maybe</span><span style="left:230px;letter-spacing:-0.051px">even</span><span style="left:262px;letter-spacing:0.050px">local</span><span style="left:293px;letter-spacing:-0.051px">admin!)</span></div>
<div class="c" style="left:382px;top:334px"><span class="w" style="letter-spacing:-0.174px;width:38px">johndo<svg class="wv" style="width:36.8px"><rect width="100%" height="6" fill="url(#wave)"/></svg></span></div>
<div class="c" style="left:470px;top:334px"><span style="letter-spacing:-0.087px">Welkom1234</span></div>
<div class="c" style="left:556px;top:334px"><span style="letter-spacing:-0.062px">10.10.10.11</span></div>
<div class="rh" style="top:351px"><i>10</i></div>
<div class="dk" style="left:0;top:367px;width:35px;height:1px"></div>
<div class="c" style="left:37px;top:351px"><span style="letter-spacing:0.016px">Valid</span><span class="w" style="left:33px;letter-spacing:0.041px;width:32px">creds<svg class="wv" style="width:32.8px"><rect width="100%" height="6" fill="url(#wave)"/></svg></span><span style="left:69px;letter-spacing:-0.055px">WITH</span><span class="w" style="left:106px;letter-spacing:-0.151px;width:27px">RDP<svg class="wv" style="width:24.8px"><rect width="100%" height="6" fill="url(#wave)"/></svg></span><span style="left:137px;letter-spacing:0.255px">access</span><span style="left:183px;letter-spacing:-0.060px">(maybe</span><span style="left:230px;letter-spacing:-0.051px">even</span><span style="left:262px;letter-spacing:0.050px">local</span><span style="left:293px;letter-spacing:-0.051px">admin!)</span></div>
<div class="c" style="left:382px;top:351px"><span style="letter-spacing:0.032px">Administrator</span></div>
<div class="c" style="left:470px;top:351px"><span style="letter-spacing:-0.087px">Welkom1234</span></div>
<div class="c" style="left:556px;top:351px"><span style="letter-spacing:-0.062px">10.10.10.11</span></div>
<div class="rh" style="top:368px"><i>11</i></div>
<div class="dk" style="left:0;top:384px;width:35px;height:1px"></div>
<div class="c" style="left:37px;top:368px"><span style="letter-spacing:0.016px">Valid</span><span class="w" style="left:33px;letter-spacing:0.041px;width:32px">creds<svg class="wv" style="width:32.8px"><rect width="100%" height="6" fill="url(#wave)"/></svg></span><span style="left:69px;letter-spacing:-0.094px">WITHOUT</span><span class="w" style="left:133px;letter-spacing:-0.151px;width:27px">RDP<svg class="wv" style="width:24.8px"><rect width="100%" height="6" fill="url(#wave)"/></svg></span><span style="left:164px;letter-spacing:0.255px">access</span></div>
<div class="c" style="left:382px;top:368px"><span class="w" style="letter-spacing:0.080px;width:44px">helsinki<svg class="wv" style="width:44.8px"><rect width="100%" height="6" fill="url(#wave)"/></svg></span></div>
<div class="c" style="left:470px;top:368px"><span style="letter-spacing:-0.087px">Welkom1234</span></div>
<div class="c" style="left:556px;top:368px"><span style="letter-spacing:-0.062px">10.10.10.12</span></div>
<div class="rh" style="top:385px"><i>12</i></div>
<div class="dk" style="left:0;top:401px;width:35px;height:1px"></div>
<div class="c" style="left:37px;top:385px"><span style="letter-spacing:0.016px">Valid</span><span class="w" style="left:33px;letter-spacing:0.041px;width:32px">creds<svg class="wv" style="width:32.8px"><rect width="100%" height="6" fill="url(#wave)"/></svg></span><span style="left:69px;letter-spacing:-0.094px">WITHOUT</span><span class="w" style="left:133px;letter-spacing:-0.151px;width:27px">RDP<svg class="wv" style="width:24.8px"><rect width="100%" height="6" fill="url(#wave)"/></svg></span><span style="left:164px;letter-spacing:0.255px">access</span></div>
<div class="c" style="left:382px;top:385px"><span class="w" style="letter-spacing:-0.147px;width:38px">nairobi<svg class="wv" style="width:36.8px"><rect width="100%" height="6" fill="url(#wave)"/></svg></span></div>
<div class="c" style="left:470px;top:385px"><span style="letter-spacing:-0.087px">Welkom1234</span></div>
<div class="c" style="left:556px;top:385px"><span style="letter-spacing:-0.062px">10.10.10.12</span></div>
<div class="rh" style="top:402px"><i>13</i></div>
<div class="dk" style="left:0;top:418px;width:35px;height:1px"></div>
<div class="c" style="left:37px;top:402px"><span style="letter-spacing:0.016px">Valid</span><span class="w" style="left:33px;letter-spacing:0.041px;width:32px">creds<svg class="wv" style="width:32.8px"><rect width="100%" height="6" fill="url(#wave)"/></svg></span><span style="left:69px;letter-spacing:-0.094px">WITHOUT</span><span class="w" style="left:133px;letter-spacing:-0.151px;width:27px">RDP<svg class="wv" style="width:24.8px"><rect width="100%" height="6" fill="url(#wave)"/></svg></span><span style="left:164px;letter-spacing:0.255px">access</span></div>
<div class="c" style="left:382px;top:402px"><span style="letter-spacing:-0.023px">professor</span></div>
<div class="c" style="left:470px;top:402px"><span style="letter-spacing:-0.087px">Welkom1234</span></div>
<div class="c" style="left:556px;top:402px"><span style="letter-spacing:-0.062px">10.10.10.12</span></div>
<div class="rh" style="top:419px"><i>14</i></div>
<div class="dk" style="left:0;top:435px;width:35px;height:1px"></div>
<div class="c" style="left:37px;top:419px"><span style="letter-spacing:0.016px">Valid</span><span class="w" style="left:33px;letter-spacing:0.041px;width:32px">creds<svg class="wv" style="width:32.8px"><rect width="100%" height="6" fill="url(#wave)"/></svg></span><span style="left:69px;letter-spacing:-0.094px">WITHOUT</span><span class="w" style="left:133px;letter-spacing:-0.151px;width:27px">RDP<svg class="wv" style="width:24.8px"><rect width="100%" height="6" fill="url(#wave)"/></svg></span><span style="left:164px;letter-spacing:0.255px">access</span></div>
<div class="c" style="left:382px;top:419px"><span class="w" style="letter-spacing:0.005px;width:34px">lisboa<svg class="wv" style="width:32.8px"><rect width="100%" height="6" fill="url(#wave)"/></svg></span></div>
<div class="c" style="left:470px;top:419px"><span style="letter-spacing:-0.087px">Welkom1234</span></div>
<div class="c" style="left:556px;top:419px"><span style="letter-spacing:-0.062px">10.10.10.12</span></div>
<div class="rh" style="top:436px"><i>15</i></div>
<div class="dk" style="left:0;top:452px;width:35px;height:1px"></div>
<div class="c" style="left:37px;top:436px"><span style="letter-spacing:0.016px">Valid</span><span class="w" style="left:33px;letter-spacing:0.041px;width:32px">creds<svg class="wv" style="width:32.8px"><rect width="100%" height="6" fill="url(#wave)"/></svg></span><span style="left:69px;letter-spacing:-0.094px">WITHOUT</span><span class="w" style="left:133px;letter-spacing:-0.151px;width:27px">RDP<svg class="wv" style="width:24.8px"><rect width="100%" height="6" fill="url(#wave)"/></svg></span><span style="left:164px;letter-spacing:0.255px">access</span></div>
<div class="c" style="left:382px;top:436px"><span class="w" style="letter-spacing:0.106px;width:28px">tokio<svg class="wv" style="width:28.8px"><rect width="100%" height="6" fill="url(#wave)"/></svg></span></div>
<div class="c" style="left:470px;top:436px"><span style="letter-spacing:-0.087px">Welkom1234</span></div>
<div class="c" style="left:556px;top:436px"><span style="letter-spacing:-0.062px">10.10.10.12</span></div>
<div class="rh" style="top:453px"><i>16</i></div>
<div class="dk" style="left:0;top:469px;width:35px;height:1px"></div>
<div class="c" style="left:37px;top:453px"><span style="letter-spacing:0.016px">Valid</span><span class="w" style="left:33px;letter-spacing:0.041px;width:32px">creds<svg class="wv" style="width:32.8px"><rect width="100%" height="6" fill="url(#wave)"/></svg></span><span style="left:69px;letter-spacing:-0.094px">WITHOUT</span><span class="w" style="left:133px;letter-spacing:-0.151px;width:27px">RDP<svg class="wv" style="width:24.8px"><rect width="100%" height="6" fill="url(#wave)"/></svg></span><span style="left:164px;letter-spacing:0.255px">access</span></div>
<div class="c" style="left:382px;top:453px"><span class="w" style="letter-spacing:-0.174px;width:38px">janedo<svg class="wv" style="width:36.8px"><rect width="100%" height="6" fill="url(#wave)"/></svg></span></div>
<div class="c" style="left:470px;top:453px"><span style="letter-spacing:-0.087px">Welkom1234</span></div>
<div class="c" style="left:556px;top:453px"><span style="letter-spacing:-0.062px">10.10.10.12</span></div>
<div class="rh" style="top:470px"><i>17</i></div>
<div class="dk" style="left:0;top:486px;width:35px;height:1px"></div>
<div class="c" style="left:37px;top:470px"><span style="letter-spacing:0.016px">Valid</span><span class="w" style="left:33px;letter-spacing:0.041px;width:32px">creds<svg class="wv" style="width:32.8px"><rect width="100%" height="6" fill="url(#wave)"/></svg></span><span style="left:69px;letter-spacing:-0.094px">WITHOUT</span><span class="w" style="left:133px;letter-spacing:-0.151px;width:27px">RDP<svg class="wv" style="width:24.8px"><rect width="100%" height="6" fill="url(#wave)"/></svg></span><span style="left:164px;letter-spacing:0.255px">access</span></div>
<div class="c" style="left:382px;top:470px"><span class="w" style="letter-spacing:-0.156px;width:70px">adm_johndo<svg class="wv" style="width:68.8px"><rect width="100%" height="6" fill="url(#wave)"/></svg></span></div>
<div class="c" style="left:470px;top:470px"><span style="letter-spacing:-0.087px">Welkom1234</span></div>
<div class="c" style="left:556px;top:470px"><span style="letter-spacing:-0.062px">10.10.10.12</span></div>
<div class="rh" style="top:487px"><i>18</i></div>
<div class="dk" style="left:0;top:503px;width:35px;height:1px"></div>
<div class="c" style="left:37px;top:487px"><span style="letter-spacing:0.016px">Valid</span><span class="w" style="left:33px;letter-spacing:0.041px;width:32px">creds<svg class="wv" style="width:32.8px"><rect width="100%" height="6" fill="url(#wave)"/></svg></span><span style="left:69px;letter-spacing:-0.094px">WITHOUT</span><span class="w" style="left:133px;letter-spacing:-0.151px;width:27px">RDP<svg class="wv" style="width:24.8px"><rect width="100%" height="6" fill="url(#wave)"/></svg></span><span style="left:164px;letter-spacing:0.255px">access</span></div>
<div class="c" style="left:382px;top:487px"><span class="w" style="letter-spacing:-0.174px;width:38px">johndo<svg class="wv" style="width:36.8px"><rect width="100%" height="6" fill="url(#wave)"/></svg></span></div>
<div class="c" style="left:470px;top:487px"><span style="letter-spacing:-0.087px">Welkom1234</span></div>
<div class="c" style="left:556px;top:487px"><span style="letter-spacing:-0.062px">10.10.10.12</span></div>
<div class="rh" style="top:504px"><i>19</i></div>
<div class="dk" style="left:0;top:520px;width:35px;height:1px"></div>
<div class="c" style="left:37px;top:504px"><span style="letter-spacing:0.016px">Valid</span><span class="w" style="left:33px;letter-spacing:0.041px;width:32px">creds<svg class="wv" style="width:32.8px"><rect width="100%" height="6" fill="url(#wave)"/></svg></span><span style="left:69px;letter-spacing:-0.094px">WITHOUT</span><span class="w" style="left:133px;letter-spacing:-0.151px;width:27px">RDP<svg class="wv" style="width:24.8px"><rect width="100%" height="6" fill="url(#wave)"/></svg></span><span style="left:164px;letter-spacing:0.255px">access</span></div>
<div class="c" style="left:382px;top:504px"><span style="letter-spacing:0.032px">Administrator</span></div>
<div class="c" style="left:470px;top:504px"><span style="letter-spacing:-0.087px">Welkom1234</span></div>
<div class="c" style="left:556px;top:504px"><span style="letter-spacing:-0.062px">10.10.10.12</span></div>
<div class="rh" style="top:521px"><i>20</i></div>
<div class="dk" style="left:0;top:537px;width:35px;height:1px"></div>
<div class="c" style="left:37px;top:521px"><span style="letter-spacing:0.016px">Valid</span><span class="w" style="left:33px;letter-spacing:0.041px;width:32px">creds<svg class="wv" style="width:32.8px"><rect width="100%" height="6" fill="url(#wave)"/></svg></span><span style="left:69px;letter-spacing:-0.094px">WITHOUT</span><span class="w" style="left:133px;letter-spacing:-0.151px;width:27px">RDP<svg class="wv" style="width:24.8px"><rect width="100%" height="6" fill="url(#wave)"/></svg></span><span style="left:164px;letter-spacing:0.255px">access</span></div>
<div class="c" style="left:382px;top:521px"><span class="w" style="letter-spacing:0.081px;width:33px">krbtgt<svg class="wv" style="width:32.8px"><rect width="100%" height="6" fill="url(#wave)"/></svg></span></div>
<div class="c" style="left:470px;top:521px"><span style="letter-spacing:-0.087px">Welkom1234</span></div>
<div class="c" style="left:556px;top:521px"><span style="letter-spacing:-0.062px">10.10.10.12</span></div>
<div class="rh" style="top:538px"><i>21</i></div>
<div class="dk" style="left:0;top:554px;width:35px;height:1px"></div>
<div class="c" style="left:37px;top:538px"><span style="letter-spacing:0.016px">Valid</span><span class="w" style="left:33px;letter-spacing:0.041px;width:32px">creds<svg class="wv" style="width:32.8px"><rect width="100%" height="6" fill="url(#wave)"/></svg></span><span style="left:69px;letter-spacing:-0.094px">WITHOUT</span><span class="w" style="left:133px;letter-spacing:-0.151px;width:27px">RDP<svg class="wv" style="width:24.8px"><rect width="100%" height="6" fill="url(#wave)"/></svg></span><span style="left:164px;letter-spacing:0.255px">access</span></div>
<div class="c" style="left:382px;top:538px"><span style="letter-spacing:0.062px">Guest</span></div>
<div class="c" style="left:470px;top:538px"><span style="letter-spacing:-0.087px">Welkom1234</span></div>
<div class="c" style="left:556px;top:538px"><span style="letter-spacing:-0.062px">10.10.10.12</span></div>
<div class="rh" style="top:555px"><i>22</i></div>
<div class="dk" style="left:0;top:571px;width:35px;height:1px"></div>
<div class="c" style="left:37px;top:555px"><span style="letter-spacing:-0.010px">Password</span><span style="left:61px;letter-spacing:-0.011px">Expired</span></div>
<div class="c" style="left:382px;top:555px"><span style="letter-spacing:-0.023px">professor</span></div>
<div class="c" style="left:470px;top:555px"><span style="letter-spacing:-0.087px">Welkom1234</span></div>
<div class="c" style="left:556px;top:555px"><span style="letter-spacing:-0.062px">10.10.10.16</span></div>
<div class="rh" style="top:572px"><i>23</i></div>
<div class="dk" style="left:0;top:588px;width:35px;height:1px"></div>
<div class="c" style="left:37px;top:572px"><span style="letter-spacing:-0.172px">Unknown</span><span style="left:57px;letter-spacing:0.243px">status,</span><span style="left:101px;letter-spacing:0.206px">check</span><span style="left:140px;letter-spacing:-0.026px">the</span><span style="left:162px;letter-spacing:-0.120px">log</span><span style="left:183px;letter-spacing:0.094px">file</span></div>
<div class="c" style="left:382px;top:572px"><span class="w" style="letter-spacing:0.005px;width:34px">lisboa<svg class="wv" style="width:32.8px"><rect width="100%" height="6" fill="url(#wave)"/></svg></span></div>
<div class="c" style="left:470px;top:572px"><span style="letter-spacing:-0.087px">Welkom1234</span></div>
<div class="c" style="left:556px;top:572px"><span style="letter-spacing:-0.062px">10.10.10.16</span></div>
<div class="rh" style="top:589px"><i>24</i></div>
<div class="dk" style="left:0;top:605px;width:35px;height:1px"></div>
<div class="c" style="left:37px;top:589px"><span style="letter-spacing:-0.172px">Unknown</span><span style="left:57px;letter-spacing:0.243px">status,</span><span style="left:101px;letter-spacing:0.206px">check</span><span style="left:140px;letter-spacing:-0.026px">the</span><span style="left:162px;letter-spacing:-0.120px">log</span><span style="left:183px;letter-spacing:0.094px">file</span></div>
<div class="c" style="left:382px;top:589px"><span class="w" style="letter-spacing:-0.174px;width:38px">janedo<svg class="wv" style="width:36.8px"><rect width="100%" height="6" fill="url(#wave)"/></svg></span></div>
<div class="c" style="left:470px;top:589px"><span style="letter-spacing:-0.087px">Welkom1234</span></div>
<div class="c" style="left:556px;top:589px"><span style="letter-spacing:-0.062px">10.10.10.16</span></div>
<div class="rh" style="top:606px"><i>25</i></div>
<div class="dk" style="left:0;top:622px;width:35px;height:1px"></div>
<div class="c" style="left:37px;top:606px"><span style="letter-spacing:0.016px">Valid</span><span class="w" style="left:33px;letter-spacing:0.041px;width:32px">creds<svg class="wv" style="width:32.8px"><rect width="100%" height="6" fill="url(#wave)"/></svg></span><span style="left:69px;letter-spacing:-0.055px">WITH</span><span class="w" style="left:106px;letter-spacing:-0.151px;width:27px">RDP<svg class="wv" style="width:24.8px"><rect width="100%" height="6" fill="url(#wave)"/></svg></span><span style="left:137px;letter-spacing:0.255px">access</span><span style="left:183px;letter-spacing:-0.060px">(maybe</span><span style="left:230px;letter-spacing:-0.051px">even</span><span style="left:262px;letter-spacing:0.050px">local</span><span style="left:293px;letter-spacing:-0.051px">admin!)</span></div>
<div class="c" style="left:382px;top:606px"><span class="w" style="letter-spacing:-0.156px;width:70px">adm_johndo<svg class="wv" style="width:68.8px"><rect width="100%" height="6" fill="url(#wave)"/></svg></span></div>
<div class="c" style="left:470px;top:606px"><span style="letter-spacing:-0.087px">Welkom1234</span></div>
<div class="c" style="left:556px;top:606px"><span style="letter-spacing:-0.062px">10.10.10.16</span></div>
<div class="rh" style="top:623px"><i>26</i></div>
<div class="dk" style="left:0;top:639px;width:35px;height:1px"></div>
<div class="c" style="left:37px;top:623px"><span style="letter-spacing:0.016px">Valid</span><span class="w" style="left:33px;letter-spacing:0.041px;width:32px">creds<svg class="wv" style="width:32.8px"><rect width="100%" height="6" fill="url(#wave)"/></svg></span><span style="left:69px;letter-spacing:-0.055px">WITH</span><span class="w" style="left:106px;letter-spacing:-0.151px;width:27px">RDP<svg class="wv" style="width:24.8px"><rect width="100%" height="6" fill="url(#wave)"/></svg></span><span style="left:137px;letter-spacing:0.255px">access</span><span style="left:183px;letter-spacing:-0.060px">(maybe</span><span style="left:230px;letter-spacing:-0.051px">even</span><span style="left:262px;letter-spacing:0.050px">local</span><span style="left:293px;letter-spacing:-0.051px">admin!)</span></div>
<div class="c" style="left:382px;top:623px"><span class="w" style="letter-spacing:-0.174px;width:38px">johndo<svg class="wv" style="width:36.8px"><rect width="100%" height="6" fill="url(#wave)"/></svg></span></div>
<div class="c" style="left:470px;top:623px"><span style="letter-spacing:-0.087px">Welkom1234</span></div>
<div class="c" style="left:556px;top:623px"><span style="letter-spacing:-0.062px">10.10.10.16</span></div>
<div class="rh" style="top:640px"><i>27</i></div>
<div class="dk" style="left:0;top:656px;width:35px;height:1px"></div>
<div class="c" style="left:37px;top:640px"><span style="letter-spacing:0.016px">Valid</span><span class="w" style="left:33px;letter-spacing:0.041px;width:32px">creds<svg class="wv" style="width:32.8px"><rect width="100%" height="6" fill="url(#wave)"/></svg></span><span style="left:69px;letter-spacing:-0.055px">WITH</span><span class="w" style="left:106px;letter-spacing:-0.151px;width:27px">RDP<svg class="wv" style="width:24.8px"><rect width="100%" height="6" fill="url(#wave)"/></svg></span><span style="left:137px;letter-spacing:0.255px">access</span><span style="left:183px;letter-spacing:-0.060px">(maybe</span><span style="left:230px;letter-spacing:-0.051px">even</span><span style="left:262px;letter-spacing:0.050px">local</span><span style="left:293px;letter-spacing:-0.051px">admin!)</span></div>
<div class="c" style="left:382px;top:640px"><span style="letter-spacing:0.032px">Administrator</span></div>
<div class="c" style="left:470px;top:640px"><span style="letter-spacing:-0.087px">Welkom1234</span></div>
<div class="c" style="left:556px;top:640px"><span style="letter-spacing:-0.062px">10.10.10.16</span></div>
<div class="rh" style="top:657px"><i>28</i></div>
<div class="dk" style="left:0;top:673px;width:35px;height:1px"></div>
<!-- dark header lines -->
<div class="dk" style="left:0;top:197px;width:35px;height:1px"></div>
<div class="dk" style="left:381px;top:197px;width:564px;height:1px"></div>
<div class="dk" style="left:35px;top:180px;width:1px;height:17px"></div>
<div class="dk" style="left:35px;top:215px;width:1px;height:445px"></div>
<!-- cursor -->
<div style="left:36px;top:198px;width:345px;height:17px;border:solid #000;border-width:1px 2px 2px 1px"></div>
<div style="left:378px;top:212px;width:5px;height:5px;background:#000"></div>
</div></body></html>
